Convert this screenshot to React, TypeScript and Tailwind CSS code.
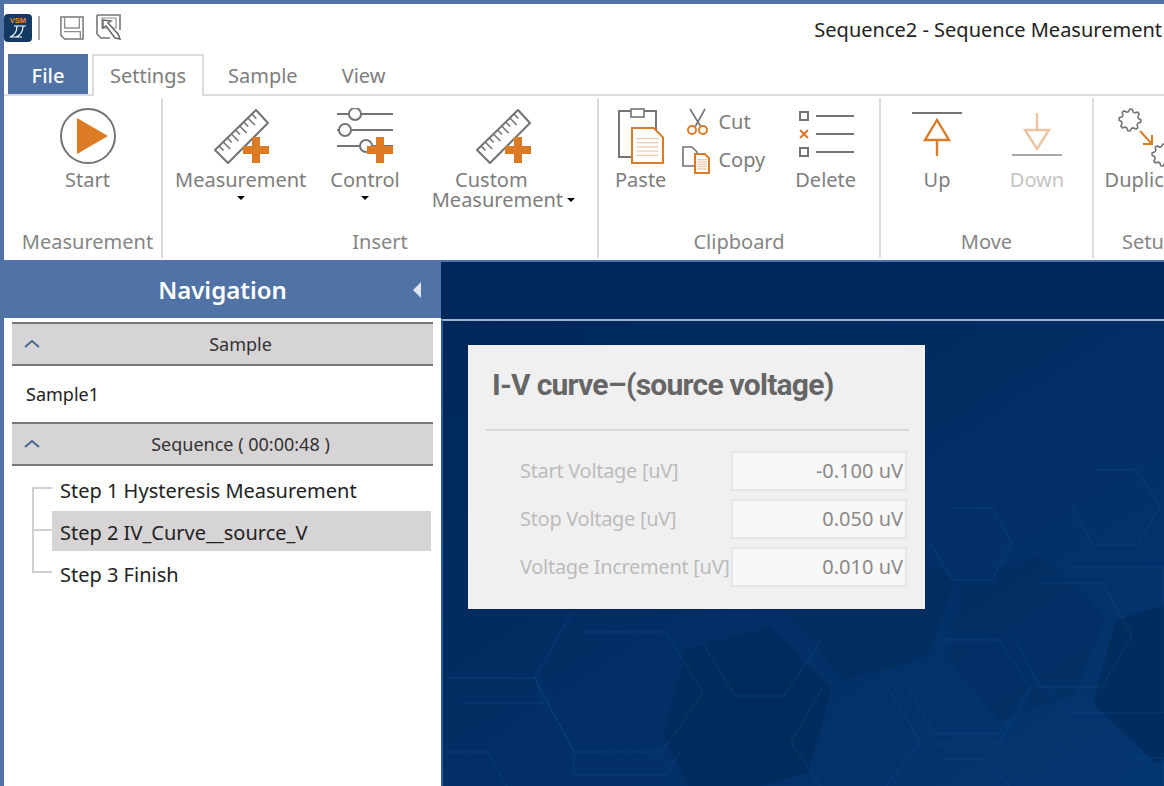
import type { ReactNode } from "react";

const orange = "#dc7a26";
const gray = "#747474";

function Plus({ x, y }: { x: number; y: number }) {
  return (
    <>
      <rect x={x} y={y + 9} width={26} height={8} fill={orange} />
      <rect x={x + 9} y={y} width={8} height={26} fill={orange} />
    </>
  );
}

function RulerPlus() {
  const ticks = [1, 2, 3, 4, 5, 6, 7, 8, 9];
  return (
    <svg viewBox="0 0 56 56" className="h-14 w-14">
      <path d="M43 2 L55 15 L15 55 L2 42 Z" fill="none" stroke={gray} strokeWidth="2" strokeLinejoin="round" />
      {ticks.map((t) => {
        const px = 2 + t * 4.1;
        const py = 42 - t * 4;
        const len = t % 2 === 0 ? 7 : 4.5;
        return <line key={t} x1={px} y1={py} x2={px + len} y2={py + len} stroke={gray} strokeWidth="1.6" />;
      })}
      <Plus x={30} y={29} />
    </svg>
  );
}

function ControlPlus() {
  return (
    <svg viewBox="0 0 56 56" className="h-14 w-14">
      {[6, 22, 38].map((y) => (
        <line key={y} x1="0" y1={y} x2="56" y2={y} stroke={gray} strokeWidth="2" />
      ))}
      <circle cx="18" cy="6" r="6" fill="white" stroke={gray} strokeWidth="2" />
      <circle cx="8" cy="22" r="6" fill="white" stroke={gray} strokeWidth="2" />
      <circle cx="29" cy="38" r="6" fill="white" stroke={gray} strokeWidth="2" />
      <Plus x={30} y={29} />
    </svg>
  );
}

function StartIcon() {
  return (
    <svg viewBox="0 0 56 56" className="h-14 w-14">
      <circle cx="28" cy="28" r="27" fill="none" stroke={gray} strokeWidth="2" />
      <path d="M17 10 L48 28 L17 46 Z" fill={orange} />
    </svg>
  );
}

function DocLines({ x, y, w, h }: { x: number; y: number; w: number; h: number }) {
  const fold = w * 0.3;
  const rows = [0.3, 0.42, 0.54, 0.66, 0.78];
  return (
    <>
      <path
        d={`M${x} ${y} H${x + w - fold} L${x + w} ${y + fold} V${y + h} H${x} Z`}
        fill="white"
        stroke={orange}
        strokeWidth="2"
      />
      {rows.map((r) => (
        <line key={r} x1={x + w * 0.15} y1={y + h * r} x2={x + w * 0.85} y2={y + h * r} stroke="#f0c7a4" strokeWidth="1.2" />
      ))}
    </>
  );
}

function PasteIcon() {
  return (
    <svg viewBox="0 0 48 56" className="h-14 w-12">
      <rect x="2" y="3" width="37" height="46" fill="white" stroke={gray} strokeWidth="2" />
      <rect x="14" y="1" width="13" height="8" fill="white" stroke={gray} strokeWidth="1.6" />
      <DocLines x={15} y={20} w={31} h={35} />
    </svg>
  );
}

function CutIcon() {
  return (
    <svg viewBox="0 0 24 28" className="h-7 w-6">
      <path d="M4 1 L15 19 M19 1 L9 19" stroke={gray} strokeWidth="1.6" fill="none" />
      <circle cx="6" cy="22" r="4" fill="none" stroke={orange} strokeWidth="2" />
      <circle cx="17" cy="22" r="4" fill="none" stroke={orange} strokeWidth="2" />
    </svg>
  );
}

function CopyIcon() {
  return (
    <svg viewBox="0 0 28 28" className="h-7 w-7">
      <path d="M1 1 H10 L15 6 V20 H1 Z" fill="white" stroke={gray} strokeWidth="1.6" />
      <DocLines x={13} y={8} w={14} h={19} />
    </svg>
  );
}

function DeleteIcon() {
  return (
    <svg viewBox="0 0 56 48" className="mt-0.5 h-12 w-14">
      <rect x="2" y="2" width="8" height="8" fill="none" stroke={gray} strokeWidth="2" />
      <path d="M2 20 L10 28 M10 20 L2 28" stroke={orange} strokeWidth="2" />
      <rect x="2" y="38" width="8" height="8" fill="none" stroke={gray} strokeWidth="2" />
      {[6, 24, 42].map((y) => (
        <line key={y} x1="18" y1={y} x2="56" y2={y} stroke={gray} strokeWidth="2" />
      ))}
    </svg>
  );
}

function UpIcon() {
  return (
    <svg viewBox="0 0 56 56" className="h-14 w-14">
      <line x1="3" y1="5" x2="53" y2="5" stroke={gray} strokeWidth="2" />
      <path d="M28 12 L40 32 H16 Z" fill="none" stroke={orange} strokeWidth="2.4" />
      <line x1="28" y1="32" x2="28" y2="48" stroke={orange} strokeWidth="2.4" />
    </svg>
  );
}

function DownIcon() {
  return (
    <svg viewBox="0 0 56 56" className="h-14 w-14">
      <line x1="3" y1="47" x2="53" y2="47" stroke="#a8a8a8" strokeWidth="2" />
      <path d="M28 41 L40 22 H16 Z" fill="none" stroke="#eec3a0" strokeWidth="2.4" />
      <line x1="28" y1="5" x2="28" y2="22" stroke="#eec3a0" strokeWidth="2.4" />
    </svg>
  );
}

function gearPath(cx: number, cy: number, r: number) {
  const pts: string[] = [];
  for (let i = 0; i < 32; i++) {
    const a = (i / 32) * Math.PI * 2;
    const rad = i % 4 < 2 ? r : r - 2.5;
    pts.push(`${(cx + Math.cos(a) * rad).toFixed(1)} ${(cy + Math.sin(a) * rad).toFixed(1)}`);
  }
  return `M${pts.join(" L")} Z`;
}

function DuplicateIcon() {
  return (
    <svg viewBox="0 0 56 56" className="h-14 w-14 overflow-visible">
      <path d={gearPath(9, 12, 11)} fill="none" stroke={gray} strokeWidth="1.6" />
      <path d={gearPath(42, 47, 11)} fill="none" stroke={gray} strokeWidth="1.6" />
      <path d="M19 23 L31 36 M22 36 H31 V27" fill="none" stroke={orange} strokeWidth="2" />
    </svg>
  );
}

function LogoIcon() {
  return (
    <svg viewBox="0 0 28 28" className="h-7 w-7">
      <rect width="28" height="28" rx="4" fill="#123a63" />
      <text x="14" y="9" textAnchor="middle" fontSize="7.5" fontWeight="700" fill="#e58a2e" fontFamily="'Liberation Sans', sans-serif">
        VSM
      </text>
      <path d="M10 12 H22 M13 12 C13 18 11 21 6 23 H12 M19 12 C19 18 17 21 12 23 H18" stroke="white" strokeWidth="1.2" fill="none" />
    </svg>
  );
}

function SaveIcon() {
  return (
    <svg viewBox="0 0 26 26" className="h-6 w-6">
      <path d="M1 1 H25 V25 H5 L1 21 Z" fill="none" stroke="#777" strokeWidth="1.6" />
      <path d="M5 1 V13 H21 V1 M4 17 H22 V25" fill="none" stroke="#8d8d8d" strokeWidth="1.4" />
    </svg>
  );
}

function SaveAsIcon() {
  return (
    <svg viewBox="0 0 28 28" className="h-7 w-7">
      <path d="M1 1 H24 V16 M14 24 H5 L1 20 V1" fill="none" stroke="#777" strokeWidth="1.6" />
      <path d="M6 4 H20 V14 H6 Z" fill="none" stroke="#8d8d8d" strokeWidth="1.2" />
      <path d="M7 6 L7 14 L10 12 L19 24 L24 25 L22 20 L12 9 L15 7 Z" fill="white" stroke="#666" strokeWidth="1.5" />
    </svg>
  );
}

function Caret({ className = "" }: { className?: string }) {
  return <span className={`h-0 w-0 border-x-4 border-t-4 border-x-transparent border-t-black ${className}`} />;
}

function Group({ label, className, children }: { label: string; className: string; children: ReactNode }) {
  return (
    <div className={`flex h-40 shrink-0 flex-col border-r-2 border-[#dcdcdc] ${className}`}>
      <div className="flex flex-1 items-start pt-2.5">{children}</div>
      <div className="pb-0.5 text-center text-xl leading-7 text-[#858585]">{label}</div>
    </div>
  );
}

function BigButton({ icon, label, caret, muted }: { icon: ReactNode; label: string; caret?: boolean; muted?: boolean }) {
  return (
    <div className={`flex shrink-0 flex-col items-center text-xl leading-8 ${muted ? "text-[#c4c4c4]" : "text-[#7d7d7d]"}`}>
      {icon}
      <span>{label}</span>
      {caret && <Caret />}
    </div>
  );
}

function SectionHeader({ label }: { label: string }) {
  return (
    <div className="flex h-11 items-center border-y-2 border-[#77787a] bg-[#d6d4d5] text-lg text-[#333]">
      <svg viewBox="0 0 16 10" className="ml-3 h-2.5 w-4">
        <path d="M1 8 L8 2 L15 8" fill="none" stroke="#49688f" strokeWidth="2" />
      </svg>
      <span className="flex-1 pl-2 text-center">{label}</span>
    </div>
  );
}

const steps = ["Step 1 Hysteresis Measurement", "Step 2 IV_Curve__source_V", "Step 3 Finish"];

const fields = [
  { label: "Start Voltage [uV]", value: "-0.100 uV" },
  { label: "Stop Voltage [uV]", value: "0.050 uV" },
  { label: "Voltage Increment [uV]", value: "0.010 uV" },
];

const hexLines = [
  "583,632 666,632 703,693 662,752 574,752 545,698",
  "943,640 999,640 1031,687 999,734 934,734 910,690",
  "952,508 992,508 1012,543 992,580 952,580 930,543",
  "1040,583 1102,583 1132,635 1102,687 1040,687 1012,635",
  "1093,470 1137,470 1160,507 1137,545 1093,545 1072,507",
  "888,687 920,742 883,790 823,790 791,742 823,687",
  "943,759 987,759 1012,790 929,790",
  "447,678 535,678 544,703 461,703",
  "703,643 735,696 784,696 823,637",
  "1072,567 1164,567 1164,713 1072,713 1036,678",
  "1132,758 1164,758 1164,790 1119,790",
  "445,752 488,752 509,790",
  "572,612 535,678 574,752 574,775 666,775 680,752",
  "936,744 999,744 1029,693",
];

const hexDark = [
  { points: "770,628 686,649 664,735 690,790 745,790 808,773 831,688", opacity: 0.7 },
  { points: "779,600 842,680 927,657 955,580 925,560 779,560", opacity: 0.4 },
  { points: "1040,555 1105,617 1077,693 999,722 950,660 955,580", opacity: 0.3 },
  { points: "1116,620 1093,703 1155,763 1164,760 1164,605", opacity: 0.7 },
];

export default function App() {
  return (
    <div className="flex h-screen w-full flex-col overflow-hidden bg-[#5072a4] pt-1 font-['Noto_Sans',sans-serif]">
      <div className="ml-1 flex flex-col overflow-hidden bg-white">
        <div className="flex h-12 items-center">
          <LogoIcon />
          <div className="ml-1.5 h-6 w-0.5 bg-[#aaa]" />
          <div className="ml-5 flex items-center gap-3">
            <SaveIcon />
            <SaveAsIcon />
          </div>
          <div className="mt-1 flex-1 whitespace-nowrap pr-0.5 text-right text-xl text-[#222]">Sequence2 - Sequence Measurement</div>
        </div>
        <div className="flex h-11 items-end border-b-2 border-[#dcdcdc] pl-1 text-xl text-[#7d7d7d]">
          <div className="flex h-10 w-20 items-center justify-center bg-[#5072a4] pt-1 font-medium text-white">File</div>
          <div className="z-10 -mb-0.5 ml-1 flex h-10.5 w-28 items-center justify-center border-x-2 border-t-2 border-[#dcdcdc] bg-white">Settings</div>
          <div className="ml-6 flex h-10 items-center pt-1">Sample</div>
          <div className="ml-11 flex h-10 items-center pt-1">View</div>
        </div>
        <div className="flex overflow-hidden py-0.5 pl-1">
          <Group label="Measurement" className="w-[155px] pl-1.5">
            <div className="flex w-full justify-center">
              <BigButton icon={<StartIcon />} label="Start" />
            </div>
          </Group>
          <Group label="Insert" className="w-[436px]">
            <div className="flex gap-6 pl-3">
              <BigButton icon={<RulerPlus />} label="Measurement" caret />
              <BigButton icon={<ControlPlus />} label="Control" caret />
              <div className="ml-2 flex flex-col items-center text-xl leading-5 text-[#7d7d7d]">
                <RulerPlus />
                <span className="mt-1.5 pr-6">Custom</span>
                <span className="flex items-center gap-1">
                  Measurement <Caret />
                </span>
              </div>
            </div>
          </Group>
          <Group label="Clipboard" className="w-[282px]">
            <div className="flex gap-5 pl-4">
              <BigButton icon={<PasteIcon />} label="Paste" />
              <div className="flex flex-col gap-2.5 text-xl leading-7 text-[#7d7d7d]">
                <div className="flex items-center gap-2">
                  <CutIcon /> Cut
                </div>
                <div className="-ml-1 flex items-center gap-2">
                  <CopyIcon /> Copy
                </div>
              </div>
              <div className="ml-2.5 flex flex-col items-center text-xl leading-8 text-[#7d7d7d]">
                <div className="flex h-14 items-start"><DeleteIcon /></div>
                <span>Delete</span>
              </div>
            </div>
          </Group>
          <Group label="Move" className="w-[213px]">
            <div className="flex gap-11 pl-7">
              <BigButton icon={<UpIcon />} label="Up" />
              <BigButton icon={<DownIcon />} label="Down" muted />
            </div>
          </Group>
          <Group label="Setup" className="w-28 border-r-0">
            <div className="flex w-full justify-center">
              <BigButton icon={<DuplicateIcon />} label="Duplicate" />
            </div>
          </Group>
        </div>
      </div>

      <div className="mt-0.5 flex flex-1">
        <div className="flex w-[441px] shrink-0 flex-col">
          <div className="flex h-14 items-center pr-5 text-white">
            <span className="flex-1 pl-8 text-center text-2xl font-semibold">Navigation</span>
            <span className="h-0 w-0 border-y-8 border-r-8 border-y-transparent border-r-[#dfe6f0]" />
          </div>
          <div className="flex-1 border-l-4 border-[#5072a4] bg-white px-2 pt-1">
            <SectionHeader label="Sample" />
            <div className="flex h-14 items-center pl-3.5 text-lg text-[#222]">Sample1</div>
            <SectionHeader label="Sequence ( 00:00:48 )" />
            <div className="pt-0.5 pr-0.5 pl-5">
              {steps.map((s, i) => (
                <div key={s} className="flex">
                  <div className="flex w-5 flex-col">
                    <div className={`h-1/2 border-b-2 border-[#d0d0d0] ${i > 0 ? "border-l-2" : ""}`} />
                    <div className={`h-1/2 ${i < 2 ? "border-l-2 border-[#d0d0d0]" : ""}`} />
                  </div>
                  <div className={`my-px flex h-10 flex-1 items-center pt-1 pl-2 text-xl text-[#222] ${i === 1 ? "bg-[#d6d4d5]" : ""}`}>{s}</div>
                </div>
              ))}
            </div>
          </div>
        </div>

        <div className="flex flex-1 flex-col bg-[#00285a]">
          <div className="h-14" />
          <div className="relative mt-px flex-1 overflow-hidden border-t-2 border-l-2 border-t-[#9db4d0] border-l-[#2e5c92] bg-linear-to-br from-[#00275a] to-[#04366f] pl-px">
            <svg viewBox="443 321 721 465" preserveAspectRatio="none" className="absolute inset-0 h-full w-full">
              {hexDark.map((h) => (
                <polygon key={h.points} points={h.points} fill="#002a58" opacity={h.opacity} />
              ))}
              {hexLines.map((p) => (
                <polyline key={p} points={p} fill="none" stroke="#0a4a86" strokeWidth="1" opacity="0.6" />
              ))}
            </svg>
            <div className="relative mt-6 ml-6 h-66 w-[457px] bg-[#f0f0f0] px-4 pt-5 shadow-sm">
              <div className="flex h-10 items-center pl-2 font-['Roboto',sans-serif] text-3xl font-bold tracking-tight text-[#666]">I-V curve–(source voltage)</div>
              <div className="mt-6 ml-0.5 border-t-2 border-[#d8d8d8]" />
              <div className="mt-5 mr-0.5 flex flex-col gap-2">
                {fields.map((f) => (
                  <div key={f.label} className="flex h-10 items-center justify-between pl-9 text-xl">
                    <span className="whitespace-nowrap tracking-[-0.015em] text-[#bcbcbc]">{f.label}</span>
                    <div className="flex h-10 w-44 shrink-0 items-center justify-end border-2 border-[#e6e6e6] bg-[#f8f8f8] pr-0.5 text-[#8a8a8a]">{f.value}</div>
                  </div>
                ))}
              </div>
            </div>
          </div>
        </div>
      </div>
    </div>
  );
}
